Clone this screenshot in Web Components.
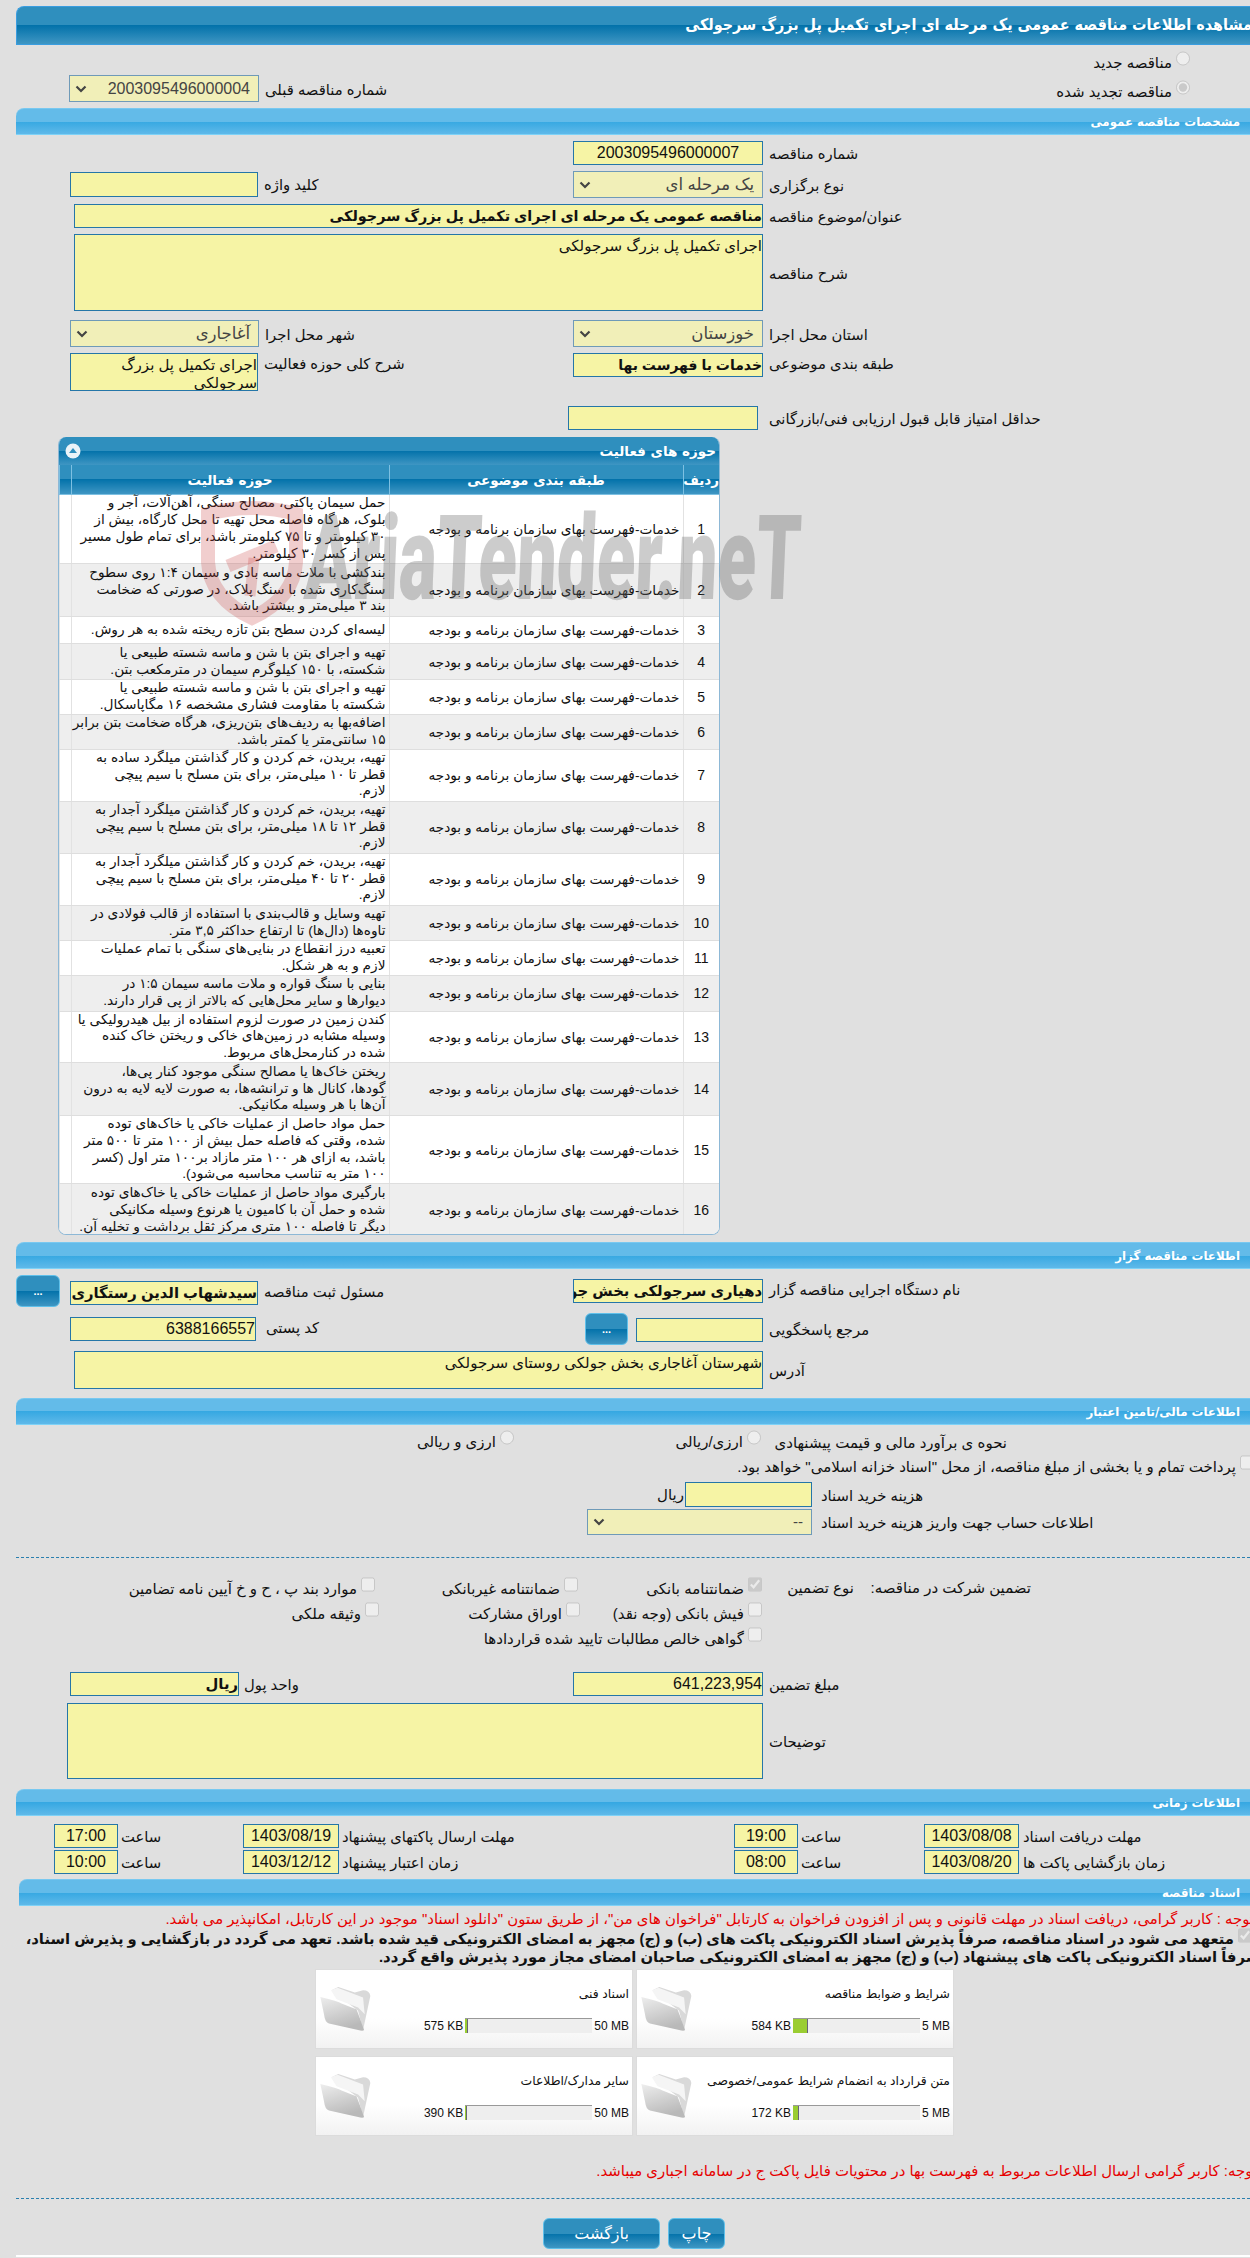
<!DOCTYPE html>
<html lang="fa">
<head>
<meta charset="utf-8">
<title>مشاهده اطلاعات مناقصه</title>
<style>
html, body {
    margin: 0;
    width: 1250px;
    height: 2258px;
    overflow: hidden;
    background: #e0e0e0;
}
body {
    font-family: "Liberation Sans", "DejaVu Sans", sans-serif;
    font-size: 15px;
    color: #111;
}
</style>
</head>
<body>
<tender-page>
    <title-bar>مشاهده اطلاعات مناقصه عمومی یک مرحله ای اجرای تکمیل پل بزرگ سرجولکی</title-bar>

    <form-row h="24" mt="6">
        <option-item type="radio" pr="60" text="مناقصه جدید"></option-item>
    </form-row>
    <form-row h="33">
        <option-item type="radio" pr="60" checked text="مناقصه تجدید شده" style="margin-top:5px"></option-item>
        <tender-field label="شماره مناقصه قبلی" kind="select" w="190" h="27" value="2003095496000004" anchor="243" size="16"></tender-field>
    </form-row>

    <section-bar>مشخصات مناقصه عمومی</section-bar>

    <form-row h="30" mt="6">
        <tender-field label="شماره مناقصه" w="190" h="24" center size="16" value="2003095496000007"></tender-field>
    </form-row>
    <form-row h="33">
        <tender-field label="نوع برگزاری" kind="select" w="190" h="27" value="یک مرحله ای" size="16.5"></tender-field>
        <tender-field label="کلید واژه" w="188" h="25" cdy="1" anchor="242"></tender-field>
    </form-row>
    <form-row h="30">
        <tender-field label="عنوان/موضوع مناقصه" w="689" h="24" bold size="14.4" value="مناقصه عمومی یک مرحله ای اجرای تکمیل پل بزرگ سرجولکی"></tender-field>
    </form-row>
    <form-row h="86">
        <tender-field label="شرح مناقصه" kind="area" w="689" h="77" size="15" value="اجرای تکمیل پل بزرگ سرجولکی"></tender-field>
    </form-row>
    <form-row h="33">
        <tender-field label="استان محل اجرا" kind="select" w="190" h="27" value="خوزستان" size="16.5"></tender-field>
        <tender-field label="شهر محل اجرا" kind="select" w="189" h="27" value="آغاجاری" anchor="243" size="16.5"></tender-field>
    </form-row>
    <form-row h="53">
        <tender-field label="طبقه بندی موضوعی" w="190" h="24" bold size="14" value="خدمات با فهرست بها" labeltop></tender-field>
        <tender-field label="شرح کلی حوزه فعالیت" kind="area" w="188" h="38" anchor="242" size="15" value="اجرای تکمیل پل بزرگ سرجولکی" labeltop></tender-field>
    </form-row>
    <form-row h="31">
        <tender-field label="حداقل امتیاز قابل قبول ارزیابی فنی/بازرگانی" w="190" h="24" anchor="189" gap="11"></tender-field>
    </form-row>

    <activity-table></activity-table>

    <section-bar mt="7">اطلاعات مناقصه گزار</section-bar>

    <form-row h="38" mt="6">
        <tender-field label="نام دستگاه اجرایی مناقصه گزار" w="190" h="24" cdy="4" bold size="14.8" value="دهیاری سرجولکی بخش جولکی"></tender-field>
        <tender-field label="مسئول ثبت مناقصه" w="188" h="24" anchor="242" cdy="4" bold size="14.8" value="سیدشهاب الدین رستگاری"><blue-button w="44" h="32" bold style="margin-right:10px">...</blue-button></tender-field>
    </form-row>
    <form-row h="38">
        <tender-field label="مرجع پاسخگویی" w="127" h="24" cdy="1"><blue-button w="43" h="32" bold style="margin-right:8px">...</blue-button></tender-field>
        <tender-field label="کد پستی" w="186" h="24" anchor="240" cdy="4" gap="10" size="16" value="6388166557"></tender-field>
    </form-row>
    <form-row h="47">
        <tender-field label="آدرس" kind="area" w="689" h="38" size="15" value="شهرستان آغاجاری بخش جولکی روستای سرجولکی"></tender-field>
    </form-row>

    <section-bar>اطلاعات مالی/تامین اعتبار</section-bar>

    <form-row flex pr="243" h="25" mt="5">
        <span style="padding-top:4px;width:238px;flex:none">نحوه ی برآورد مالی و قیمت پیشنهادی</span>
        <option-item type="radio" w="247" text="ارزی/ریالی" style="margin-right:8px"></option-item>
        <option-item type="radio" text="ارزی و ریالی"></option-item>
    </form-row>
    <form-row flex pr="-4" h="27">
        <option-item type="checkbox" text="پرداخت تمام و یا بخشی از مبلغ مناقصه، از محل &quot;اسناد خزانه اسلامی&quot; خواهد بود."></option-item>
    </form-row>
    <form-row h="27">
        <tender-field label="هزینه خرید اسناد" w="127" h="25" anchor="243" gap="9"><span style="margin-right:1px">ریال</span></tender-field>
    </form-row>
    <form-row h="48">
        <tender-field label="اطلاعات حساب جهت واریز هزینه خرید اسناد" kind="select" w="225" h="26" anchor="243" gap="9" value="--"></tender-field>
    </form-row>

    <dotted-line></dotted-line>

    <form-row flex pr="219" h="25" mt="19">
        <span style="padding-top:2px;width:177px;flex:none">تضمین شرکت در مناقصه:</span>
        <span style="padding-top:2px;width:92px;flex:none">نوع تضمین</span>
        <option-item type="checkbox" checked w="184" text="ضمانتنامه بانکی"></option-item>
        <option-item type="checkbox" w="203" text="ضمانتنامه غیربانکی"></option-item>
        <option-item type="checkbox" text="موارد بند پ ، ح و خ آیین نامه تضامین"></option-item>
    </form-row>
    <form-row flex pr="488" h="25">
        <option-item type="checkbox" w="182" text="فیش بانکی (وجه نقد)"></option-item>
        <option-item type="checkbox" w="201" text="اوراق مشارکت"></option-item>
        <option-item type="checkbox" text="وثیقه ملکی"></option-item>
    </form-row>
    <form-row flex pr="488" h="45">
        <option-item type="checkbox" text="گواهی خالص مطالبات تایید شده قراردادها"></option-item>
    </form-row>

    <form-row h="31">
        <tender-field label="مبلغ تضمین" w="190" h="24" size="16" value="641,223,954"></tender-field>
        <tender-field label="واحد پول" w="169" h="24" anchor="223" gap="5" bold size="14.8" value="ریال"></tender-field>
    </form-row>
    <form-row h="86">
        <tender-field label="توضیحات" kind="area" w="696" h="76"></tender-field>
    </form-row>

    <section-bar>اطلاعات زمانی</section-bar>

    <form-row h="26" mt="8" cols="390px 260px 435px 149px">
        <tender-field label="مهلت دریافت اسناد" w="95" h="24" anchor="159" gap="4" center size="16" value="1403/08/08"></tender-field>
        <tender-field label="ساعت" w="64" h="24" anchor="198" gap="3" center size="16" value="19:00"></tender-field>
        <tender-field label="مهلت ارسال پاکتهای پیشنهاد" w="96" h="24" anchor="174" gap="3" center size="16" value="1403/08/19"></tender-field>
        <tender-field label="ساعت" w="64" h="24" anchor="102" gap="3" center size="16" value="17:00"></tender-field>
    </form-row>
    <form-row h="29" cols="390px 260px 435px 149px">
        <tender-field label="زمان بازگشایی پاکت ها" w="95" h="24" anchor="159" gap="4" center size="16" value="1403/08/20"></tender-field>
        <tender-field label="ساعت" w="64" h="24" anchor="198" gap="3" center size="16" value="08:00"></tender-field>
        <tender-field label="زمان اعتبار پیشنهاد" w="96" h="24" anchor="174" gap="3" center size="16" value="1403/12/12"></tender-field>
        <tender-field label="ساعت" w="64" h="24" anchor="102" gap="3" center size="16" value="10:00"></tender-field>
    </form-row>

    <section-bar left="3">اسناد مناقصه</section-bar>

    <notice-line color="#e60000" h="18" mt="4" pr="-4">توجه : کاربر گرامی، دریافت اسناد در مهلت قانونی و پس از افزودن فراخوان به کارتابل "فراخوان های من"، از طریق ستون "دانلود اسناد" موجود در این کارتابل، امکانپذیر می باشد.</notice-line>
    <form-row flex pr="-2" h="20">
        <option-item type="checkbox" checked bold text="متعهد می شود در اسناد مناقصه، صرفاً پذیرش اسناد الکترونیکی پاکت های (ب) و (ج) مجهز به امضای الکترونیکی قید شده باشد. تعهد می گردد در بازگشایی و پذیرش اسناد،"></option-item>
    </form-row>
    <notice-line bold h="18" pr="-10">صرفاً اسناد الکترونیکی پاکت های پیشنهاد (ب) و (ج) مجهز به امضای الکترونیکی صاحبان امضای مجاز مورد پذیرش واقع گردد.</notice-line>

    <doc-grid>
        <doc-card name="شرایط و ضوابط مناقصه" used="584 KB" max="5 MB" fill="15"></doc-card>
        <doc-card name="اسناد فنی" used="575 KB" max="50 MB" fill="3"></doc-card>
        <doc-card name="متن قرارداد به انضمام شرایط عمومی/خصوصی" used="172 KB" max="5 MB" fill="6"></doc-card>
        <doc-card name="سایر مدارک/اطلاعات" used="390 KB" max="50 MB" fill="2"></doc-card>
    </doc-grid>

    <notice-line color="#e60000" h="18" mt="27" pr="-7">توجه: کاربر گرامی ارسال اطلاعات مربوط به فهرست بها در محتویات فایل پاکت ج در سامانه اجباری میباشد.</notice-line>

    <dotted-line mt="18"></dotted-line>

    <form-row flex pr="525" h="31" mt="19">
        <blue-button w="57" h="31">چاپ</blue-button>
        <blue-button w="117" h="31" style="margin-right:8px">بازگشت</blue-button>
    </form-row>
    <div style="height:6px"></div>
    <div style="height:2px;background:#fff"></div>
</tender-page>

<script>
const BAR_DARK = "linear-gradient(#2f8fbe 0, #2f8fbe 50%, #0372aa 50%, #3f96c3 100%)";

class TenderPage extends HTMLElement {
    constructor() {
        super();
        this.attachShadow({ mode: "open" }).innerHTML = `
        <style>
        :host {
            display: block;
            box-sizing: border-box;
            width: 1234px;
            margin-left: 16px;
            padding-top: 6px;
            direction: rtl;
        }
        </style>
        <slot></slot>`;
    }
}

class TitleBar extends HTMLElement {
    constructor() {
        super();
        this.attachShadow({ mode: "open" }).innerHTML = `
        <style>
        :host {
            display: block;
            height: 39px;
            box-sizing: border-box;
            overflow: hidden;
            border-top-left-radius: 8px;
            border-top: 1px solid #3a9de0;
            border-left: 1px solid #3a9de0;
            border-bottom: 1px solid #3a9de0;
            background: ${BAR_DARK};
            color: #fff;
            font: bold condensed 16px "DejaVu Sans", sans-serif;
            white-space: nowrap;
        }
        div { margin-right: -2px; line-height: 36px; }
        </style>
        <div><slot></slot></div>`;
    }
}

class SectionBar extends HTMLElement {
    constructor() {
        super();
        this.attachShadow({ mode: "open" });
    }

    connectedCallback() {
        const mt = this.getAttribute("mt") || 0;
        const left = this.getAttribute("left") || 0;
        this.shadowRoot.innerHTML = `
        <style>
        :host {
            display: block;
            height: 27px;
            margin-top: ${mt}px;
            margin-left: ${left}px;
            box-sizing: border-box;
            padding-right: 10px;
            border-top-left-radius: 8px;
            border-bottom: 1px solid #7ed2f7;
            border-top: 1px solid #78c8f0;
            background: linear-gradient(#63bbe9 0, #63bbe9 50%, #36a8e2 50%, #5fb9e9 100%);
            color: #fff;
            font: bold 11.8px/26px "DejaVu Sans", sans-serif;
        }
        </style>
        <slot></slot>`;
    }
}

class FormRow extends HTMLElement {
    constructor() {
        super();
        this.attachShadow({ mode: "open" });
    }

    connectedCallback() {
        const h = this.getAttribute("h");
        const mt = this.getAttribute("mt") || 0;
        const pr = this.getAttribute("pr") || 0;
        const cols = this.getAttribute("cols") || "681px 553px";
        const layout = this.hasAttribute("flex")
            ? `display: flex; margin-right: ${pr}px; align-items: flex-start;`
            : `display: grid; grid-template-columns: ${cols}; align-items: start;`;
        this.shadowRoot.innerHTML = `
        <style>
        :host {
            ${layout}
            height: ${h}px;
            margin-top: ${mt}px;
            white-space: nowrap;
        }
        </style>
        <slot></slot>`;
    }
}

class TenderField extends HTMLElement {
    constructor() {
        super();
        this.attachShadow({ mode: "open" });
    }

    connectedCallback() {
        const a = name => this.getAttribute(name);
        const kind = a("kind") || "input";
        const chevron = kind === "select"
            ? `<svg width="12" height="8" viewBox="0 0 12 8"><path d="M1.5 1.5 6 6l4.5-4.5" fill="none" stroke="#444" stroke-width="2.2"/></svg>`
            : "";
        const size = a("size") || 15;
        this.shadowRoot.innerHTML = `
        <style>
        :host {
            display: grid;
            grid-template-columns: ${a("anchor") || 194}px 1fr;
            column-gap: ${a("gap") || 6}px;
            direction: ltr;
            align-items: ${this.hasAttribute("labeltop") ? "start" : "center"};
        }
        .cell { display: flex; justify-content: flex-end; align-items: center; direction: ltr; }
        .ctrl {
            flex: none;
            position: relative;
            width: ${a("w")}px;
            height: ${a("h")}px;
            margin-top: ${a("cdy") || 0}px;
            box-sizing: border-box;
            overflow: hidden;
            direction: rtl;
            text-align: ${this.hasAttribute("center") ? "center" : "right"};
            font-size: ${size}px;
            font-weight: ${this.hasAttribute("bold") ? "bold" : "normal"};
            line-height: ${parseInt(a("h")) - 2}px;
            background: #f6f4a5;
            border: 1px solid #2576a8;
            color: #111;
            white-space: nowrap;
        }
        .select {
            background: #f1efb8;
            border-color: #6f9ab8;
            color: #444;
            padding-right: 8px;
            display: flex;
            align-items: center;
            justify-content: space-between;
        }
        .area { white-space: normal; line-height: 17.5px; padding-top: 2px; }
        .label {
            direction: rtl;
            justify-self: start;
            white-space: nowrap;
            font-size: 14.8px;
            padding-top: ${this.hasAttribute("labeltop") ? 2 : 1}px;
        }
        svg { margin-left: 5px; }
        </style>
        <div class="cell"><slot></slot><div class="ctrl ${kind}"><span>${a("value") || ""}</span>${chevron}</div></div>
        <div class="label">${a("label")}</div>`;
    }
}

class OptionItem extends HTMLElement {
    constructor() {
        super();
        this.attachShadow({ mode: "open" });
    }

    connectedCallback() {
        const a = name => this.getAttribute(name);
        const w = a("w") ? `width: ${a("w")}px; flex: none;` : "";
        const pr = a("pr") ? `margin-right: ${a("pr")}px;` : "";
        const bold = this.hasAttribute("bold");
        this.shadowRoot.innerHTML = `
        <style>
        :host {
            display: flex;
            align-items: flex-start;
            gap: 4px;
            ${w}
            ${pr}
            white-space: nowrap;
            font-weight: ${bold ? "bold" : "normal"};
            font-size: ${bold ? 14.8 : 15}px;
        }
        input { margin: 0; width: 14px; height: 15px; flex: none; }
        span { padding-top: ${bold ? 2 : 3}px; }
        </style>
        <input type="${a("type")}" disabled ${this.hasAttribute("checked") ? "checked" : ""}>
        <span>${a("text")}</span>`;
    }
}

class DottedLine extends HTMLElement {
    constructor() {
        super();
        this.attachShadow({ mode: "open" });
    }

    connectedCallback() {
        this.shadowRoot.innerHTML = `
        <style>
        :host {
            display: block;
            height: 0;
            margin-top: ${this.getAttribute("mt") || 0}px;
            border-top: 1px dashed #2a7fae;
        }
        </style>`;
    }
}

class BlueButton extends HTMLElement {
    constructor() {
        super();
        this.attachShadow({ mode: "open" });
    }

    connectedCallback() {
        const a = name => this.getAttribute(name);
        this.shadowRoot.innerHTML = `
        <style>
        :host {
            display: flex;
            flex: none;
            align-items: center;
            justify-content: center;
            box-sizing: border-box;
            width: ${a("w")}px;
            height: ${a("h")}px;
            border: 1px solid #5fc0ea;
            border-radius: 6px;
            background: ${BAR_DARK};
            color: #fff;
            font-size: ${this.hasAttribute("bold") ? 11 : 16}px;
            font-weight: ${this.hasAttribute("bold") ? "bold" : "normal"};
            cursor: pointer;
            direction: rtl;
        }
        </style>
        <slot></slot>`;
    }
}

class NoticeLine extends HTMLElement {
    constructor() {
        super();
        this.attachShadow({ mode: "open" });
    }

    connectedCallback() {
        const a = name => this.getAttribute(name);
        this.shadowRoot.innerHTML = `
        <style>
        :host {
            display: block;
            height: ${a("h")}px;
            margin-top: ${a("mt") || 0}px;
            margin-right: ${a("pr") || 0}px;
            line-height: ${a("h")}px;
            white-space: nowrap;
            color: ${a("color") || "#111"};
            font-weight: ${this.hasAttribute("bold") ? "bold" : "normal"};
            font-size: ${this.hasAttribute("bold") ? 14.8 : 14.9}px;
        }
        </style>
        <slot></slot>`;
    }
}

class DocGrid extends HTMLElement {
    constructor() {
        super();
        this.attachShadow({ mode: "open" }).innerHTML = `
        <style>
        :host {
            display: grid;
            grid-template-columns: 316px 316px;
            grid-auto-rows: 78px;
            gap: 9px 5px;
            margin: 4px 297px 0 0;
            justify-content: start;
        }
        </style>
        <slot></slot>`;
    }
}

class DocCard extends HTMLElement {
    constructor() {
        super();
        this.attachShadow({ mode: "open" });
    }

    connectedCallback() {
        const a = name => this.getAttribute(name);
        this.shadowRoot.innerHTML = `
        <style>
        :host {
            display: flex;
            direction: ltr;
            background: linear-gradient(#fff 0, #fff 62%, #f2f2f2 100%);
            outline: 1px solid #dcdcdc;
            font-size: 12px;
        }
        .folder { flex: none; margin: 16px 0 0 4px; }
        .body { flex: 1; display: flex; flex-direction: column; padding: 16px 3px 0 0; }
        .name { direction: rtl; height: 32px; white-space: nowrap; font-size: 12.4px; }
        .meter { display: flex; justify-content: flex-end; align-items: center; gap: 2px; }
        .bar { width: 127px; height: 15px; box-sizing: border-box; background: #eee; border-top: 1px solid #999; }
        .fill { height: 100%; width: ${a("fill")}px; background: #9acd32; border-right: 1px solid #667; box-sizing: border-box; }
        </style>
        <svg class="folder" width="53" height="48" viewBox="35 65 160 145">
            <defs>
                <linearGradient id="f" x1="0" y1="0" x2="0.4" y2="1">
                    <stop offset="0" stop-color="#eeeeee"/>
                    <stop offset="1" stop-color="#b9b9b9"/>
                </linearGradient>
            </defs>
            <path d="M70 78 90 68l50 17 25-7q20 0 22 17l-22 103-15-58z" fill="#d9d9d9"/>
            <path d="M68 78 88 70l77 30 5 50-20-20-65-25z" fill="#f5f5f5"/>
            <path d="M36 98q54 12 64 20 35 14 45 17 10 25 23 63-3 4-18 0L62 178q-12-3-15-28z" fill="url(#f)"/>
        </svg>
        <div class="body">
            <div class="name">${a("name")}</div>
            <div class="meter">
                <span>${a("used")}</span>
                <div class="bar"><div class="fill"></div></div>
                <span>${a("max")}</span>
            </div>
        </div>`;
    }
}

const CATEGORY = "خدمات-فهرست بهای سازمان برنامه و بودجه";
const ACTIVITIES = [
    [69, "حمل سیمان پاکتی، مصالح سنگی، آهن‌آلات، آجر و|بلوک، هرگاه فاصله محل تهیه تا محل کارگاه، بیش از|۳۰ کیلومتر و تا ۷۵ کیلومتر باشد، برای تمام طول مسیر|پس از کسر ۳۰ کیلومتر."],
    [53, "بندکشی با ملات ماسه بادی و سیمان ۱:۴ روی سطوح|سنگ‌کاری شده با سنگ پلاک، در صورتی که ضخامت|بند ۳ میلی‌متر و بیشتر باشد."],
    [27, "لیسه‌ای کردن سطح بتن تازه ریخته شده به هر روش."],
    [36, "تهیه و اجرای بتن با شن و ماسه شسته طبیعی یا|شکسته، با ۱۵۰ کیلوگرم سیمان در مترمکعب بتن."],
    [34, "تهیه و اجرای بتن با شن و ماسه شسته طبیعی یا|شکسته با مقاومت فشاری مشخصه ۱۶ مگاپاسکال."],
    [35, "اضافه‌بها به ردیف‌های بتن‌ریزی، هرگاه ضخامت بتن برابر|۱۵ سانتی‌متر یا کمتر باشد."],
    [52, "تهیه، بریدن، خم کردن و کار گذاشتن میلگرد ساده به|قطر تا ۱۰ میلی‌متر، برای بتن مسلح با سیم پیچی|لازم."],
    [52, "تهیه، بریدن، خم کردن و کار گذاشتن میلگرد آجدار به|قطر ۱۲ تا ۱۸ میلی‌متر، برای بتن مسلح با سیم پیچی|لازم."],
    [52, "تهیه، بریدن، خم کردن و کار گذاشتن میلگرد آجدار به|قطر ۲۰ تا ۴۰ میلی‌متر، برای بتن مسلح با سیم پیچی|لازم."],
    [35, "تهیه وسایل و قالب‌بندی با استفاده از قالب فولادی در|تاوه‌ها (دال‌ها) تا ارتفاع حداکثر ۳,۵ متر."],
    [35, "تعبیه درز انقطاع در بنایی‌های سنگی با تمام عملیات|لازم و به هر شکل."],
    [36, "بنایی با سنگ قواره و ملات ماسه سیمان ۱:۵ در|دیوارها و سایر محل‌هایی که بالاتر از پی قرار دارند."],
    [51, "کندن زمین در صورت لزوم استفاده از بیل هیدرولیکی یا|وسیله مشابه در زمین‌های خاکی و ریختن خاک کنده|شده در کنارمحل‌های مربوط."],
    [53, "ریختن خاک‌ها یا مصالح سنگی موجود کنار پی‌ها،|گودها، کانال ها و ترانشه‌ها، به صورت لایه لایه به درون|آن‌ها با هر وسیله مکانیکی."],
    [68, "حمل مواد حاصل از عملیات خاکی یا خاک‌های توده|شده، وقتی که فاصله حمل بیش از ۱۰۰ متر تا ۵۰۰ متر|باشد، به ازای هر ۱۰۰ متر مازاد بر۱۰۰ متر اول (کسر|۱۰۰ متر به تناسب محاسبه می‌شود)."],
    [53, "بارگیری مواد حاصل از عملیات خاکی یا خاک‌های توده|شده و  حمل آن با کامیون یا هرنوع وسیله مکانیکی|دیگر تا فاصله ۱۰۰ متری مرکز ثقل  برداشت و تخلیه آن."]
];

class ActivityTable extends HTMLElement {
    constructor() {
        super();
        this.attachShadow({ mode: "open" });
    }

    connectedCallback() {
        const rows = ACTIVITIES.map((row, i) => `
            <tr style="height:${row[0]}px" class="${i % 2 ? "odd" : ""}">
                <td class="num">${i + 1}</td>
                <td class="cat">${CATEGORY}</td>
                <td class="act">${row[1].split("|").join("<br>")}</td>
                <td></td>
            </tr>`).join("");
        this.shadowRoot.innerHTML = `
        <style>
        :host {
            display: block;
            position: relative;
            width: 662px;
            margin-right: 530px;
        }
        .box {
            box-sizing: border-box;
            height: 798px;
            overflow: hidden;
            background: #fff;
            border: 1px solid #8db8d6;
            border-top: 0;
            border-radius: 8px;
        }
        .head {
            display: flex;
            justify-content: space-between;
            align-items: center;
            height: 28px;
            padding: 0 3px 0 6px;
            background: ${BAR_DARK};
            color: #fff;
            font: bold 13.5px "DejaVu Sans", sans-serif;
        }
        table { width: 660px; table-layout: fixed; border-collapse: collapse; font-size: 13.7px; }
        th {
            height: 29px;
            padding: 0;
            background: ${BAR_DARK};
            color: #fff;
            font: bold 13.5px "DejaVu Sans", sans-serif;
            border-left: 1px solid #7dc0e2;
            border-bottom: 1px solid #7dc0e2;
        }
        td { padding: 0; border-left: 1px solid #e2e2e2; border-bottom: 1px solid #dedede; }
        tr.odd td { background: #eee; }
        .num { text-align: center; font-size: 14px; }
        .cat { padding-right: 3px; white-space: nowrap; }
        .act { padding-right: 3px; white-space: nowrap; line-height: 16.8px; }
        .mark {
            position: absolute;
            top: 60px;
            left: 0;
            width: 760px;
            height: 130px;
            pointer-events: none;
        }
        .word {
            position: absolute;
            left: 247px;
            top: -3px;
            color: rgba(105, 105, 105, .34);
            font: 900 118px/130px "Roboto", sans-serif;
            transform-origin: 0 50%;
            transform: scaleX(.6) skewX(-4deg);
            white-space: nowrap;
            direction: ltr;
        }
        .shield { position: absolute; left: 142px; top: 3px; }
        </style>
        <div class="box">
            <div class="head">
                <span>حوزه های فعالیت</span>
                <svg width="16" height="16" viewBox="0 0 16 16">
                    <circle cx="8" cy="8" r="7.5" fill="#eaf3f8"/>
                    <path d="M4 10 8 5l4 5z" fill="#2f8fbe"/>
                </svg>
            </div>
            <table>
                <colgroup><col style="width:36px"><col style="width:294px"><col style="width:318px"><col style="width:12px"></colgroup>
                <tr><th>ردیف</th><th>طبقه بندی موضوعی</th><th>حوزه فعالیت</th><th></th></tr>
                ${rows}
            </table>
        </div>
        <div class="mark">
            <svg class="shield" width="104" height="126" viewBox="0 0 104 126" fill="none" stroke="rgba(200,65,65,.26)">
                <path d="M8 14Q52 2 96 14V62Q94 98 52 118 10 98 8 62Z" stroke-width="14"/>
                <path d="M28 66 76 46" stroke-width="13"/>
                <path d="M54 58 50 96" stroke-width="11"/>
            </svg>
            <span class="word">AriaTender.neT</span>
        </div>`;
    }
}

customElements.define("tender-page", TenderPage);
customElements.define("title-bar", TitleBar);
customElements.define("section-bar", SectionBar);
customElements.define("form-row", FormRow);
customElements.define("tender-field", TenderField);
customElements.define("option-item", OptionItem);
customElements.define("dotted-line", DottedLine);
customElements.define("blue-button", BlueButton);
customElements.define("notice-line", NoticeLine);
customElements.define("doc-grid", DocGrid);
customElements.define("doc-card", DocCard);
customElements.define("activity-table", ActivityTable);
</script>
</body>
</html>
